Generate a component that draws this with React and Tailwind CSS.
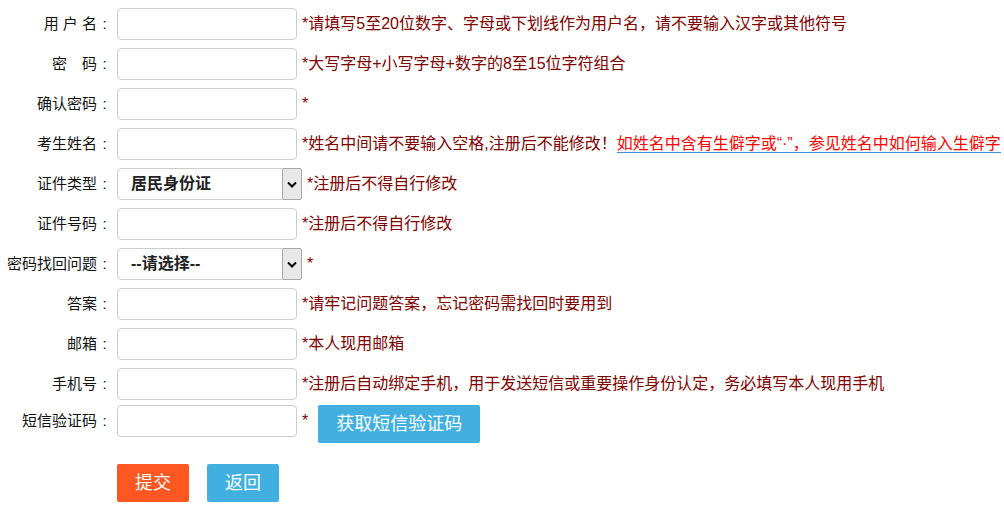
import React from "react";

const FONT = { fontFamily: '"Liberation Sans", "Noto Sans CJK SC", sans-serif' };

const rows = [
  { label: "用 户 名", hint: "*请填写5至20位数字、字母或下划线作为用户名，请不要输入汉字或其他符号" },
  { label: "密　码", hint: "*大写字母+小写字母+数字的8至15位字符组合" },
  { label: "确认密码", hint: "*" },
  { label: "考生姓名", hint: "*姓名中间请不要输入空格,注册后不能修改！", link: true },
  { label: "证件类型", select: "居民身份证", hint: "*注册后不得自行修改" },
  { label: "证件号码", hint: "*注册后不得自行修改" },
  { label: "密码找回问题", select: "--请选择--", hint: "*" },
  { label: "答案", hint: "*请牢记问题答案，忘记密码需找回时要用到" },
  { label: "邮箱", hint: "*本人现用邮箱" },
  { label: "手机号", hint: "*注册后自动绑定手机，用于发送短信或重要操作身份认定，务必填写本人现用手机" },
];

const Label = ({ text }) => (
  <label className="flex h-8 w-[112px] shrink-0 items-center justify-end text-[15px] text-[#111]">
    {text}
    <span className="inline-block w-[15px] text-center">:</span>
  </label>
);

const TextBox = () => (
  <input
    type="text"
    className="h-8 w-[180px] rounded-[4px] border border-[#cccccc] bg-white px-2 outline-none"
  />
);

const SelectBox = ({ value }) => (
  <div className="flex h-8 w-[185px] items-center rounded-[4px] border border-[#cccccc] bg-white">
    <span className="flex-1 pl-[13px] text-[16px] font-bold text-[#222]">{value}</span>
    <span className="mr-[-1px] flex h-8 w-[20px] items-center justify-center rounded-[2px] border border-[#a8a8a8] bg-[#e8e8e8]">
      <svg width="10" height="7" viewBox="0 0 10 7">
        <path d="M1 1.5 L5 5.5 L9 1.5" fill="none" stroke="#000" strokeWidth="2" />
      </svg>
    </span>
  </div>
);

const FormRow = ({ row }) => (
  <div className="flex h-10 items-center whitespace-nowrap">
    <Label text={row.label} />
    <div className="ml-[5px] shrink-0">
      {row.select ? <SelectBox value={row.select} /> : <TextBox />}
    </div>
    <span className="ml-[5px] text-[16px] text-[#800000]">
      {row.hint}
      {row.link && (
        <a href="#" className="border-b border-[#3d8fe0] text-[#ff0000]">
          如姓名中含有生僻字或“·”，参见姓名中如何输入生僻字
        </a>
      )}
    </span>
  </div>
);

export default function App() {
  return (
    <div className="h-[512px] w-[1004px] overflow-hidden bg-white pt-1" style={FONT}>
      {rows.map((row) => (
        <FormRow key={row.label} row={row} />
      ))}

      <div className="mt-[1px] flex items-start whitespace-nowrap">
        <Label text="短信验证码" />
        <div className="ml-[5px] shrink-0">
          <TextBox />
        </div>
        <span className="ml-[5px] flex h-8 items-center text-[16px] text-[#800000]">*</span>
        <button className="ml-[10px] h-[38px] w-[162px] rounded-[2px] bg-[#41b0e1] text-[18px] text-white">
          获取短信验证码
        </button>
      </div>

      <div className="mt-[21px] flex gap-[18px] pl-[117px]">
        <button className="h-[38px] w-[72px] rounded-[2px] bg-[#ff5722] text-[18px] text-white">提交</button>
        <button className="h-[38px] w-[72px] rounded-[2px] bg-[#41b0e1] text-[18px] text-white">返回</button>
      </div>
    </div>
  );
}
